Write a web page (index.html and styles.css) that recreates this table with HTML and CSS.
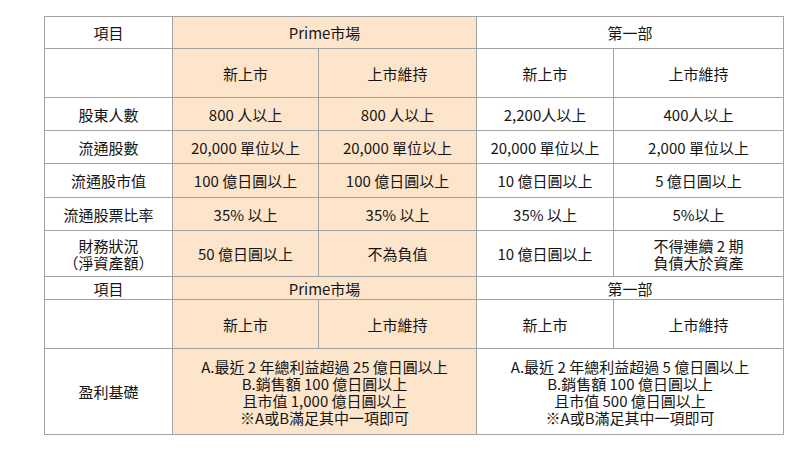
FILE: index.html
```html
<!DOCTYPE html>
<html lang="zh-Hant">
<head>
<meta charset="utf-8">
<link rel="stylesheet" href="styles.css">
</head>
<body>
<div class="wrap">
<table class="grid">
<colgroup>
<col class="c1"><col class="c2"><col class="c3"><col class="c4"><col class="c5">
</colgroup>
<tr class="h32"><td>項目</td><td class="pk" colspan="2">Prime市場</td><td colspan="2">第一部</td></tr>
<tr class="h49"><td></td><td class="pk">新上市</td><td class="pk">上市維持</td><td>新上市</td><td>上市維持</td></tr>
<tr class="h33"><td>股東人數</td><td class="pk">800 人以上</td><td class="pk">800 人以上</td><td>2,200人以上</td><td>400人以上</td></tr>
<tr class="h33"><td>流通股數</td><td class="pk">20,000 單位以上</td><td class="pk">20,000 單位以上</td><td>20,000 單位以上</td><td>2,000 單位以上</td></tr>
<tr class="h34"><td>流通股市值</td><td class="pk">100 億日圓以上</td><td class="pk">100 億日圓以上</td><td>10 億日圓以上</td><td>5 億日圓以上</td></tr>
<tr class="h33"><td>流通股票比率</td><td class="pk">35% 以上</td><td class="pk">35% 以上</td><td>35% 以上</td><td>5%以上</td></tr>
<tr class="h46"><td>財務狀況<br>（淨資產額）</td><td class="pk">50 億日圓以上</td><td class="pk">不為負值</td><td>10 億日圓以上</td><td>不得連續 2 期<br>負債大於資產</td></tr>
<tr class="h23"><td>項目</td><td class="pk" colspan="2">Prime市場</td><td colspan="2">第一部</td></tr>
<tr class="h49"><td></td><td class="pk">新上市</td><td class="pk">上市維持</td><td>新上市</td><td>上市維持</td></tr>
<tr class="h86"><td>盈利基礎</td><td class="pk" colspan="2">A.最近 2 年總利益超過 25 億日圓以上<br>B.銷售額 100 億日圓以上<br>且市值 1,000 億日圓以上<br>※A或B滿足其中一項即可</td><td colspan="2">A.最近 2 年總利益超過 5 億日圓以上<br>B.銷售額 100 億日圓以上<br>且市值 500 億日圓以上<br>※A或B滿足其中一項即可</td></tr>
</table>
</div>
</body>
</html>
```
FILE: styles.css
```css
html, body {
  margin: 0;
  padding: 0;
  background: #ffffff;
}
.wrap {
  padding: 16px 0 0 44px;
}
.grid {
  border-collapse: collapse;
  table-layout: fixed;
  width: 739px;
  font-family: "Noto Sans CJK TC", "Noto Sans", sans-serif;
  font-size: 15px;
  line-height: 17px;
  color: #151515;
}
.c1 { width: 128px; }
.c2 { width: 146px; }
.c3 { width: 158px; }
.c4 { width: 137px; }
.c5 { width: 170px; }
.grid td {
  border: 1px solid #a3a3a3;
  text-align: center;
  vertical-align: middle;
  padding: 0;
  background: #ffffff;
  overflow: hidden;
}
.grid td.pk {
  background: #fde5cc;
}
.h23 { height: 23px; }
.h32 { height: 32px; }
.h33 { height: 33px; }
.h34 { height: 34px; }
.h46 { height: 46px; }
.h49 { height: 49px; }
.h86 { height: 86px; }
```
